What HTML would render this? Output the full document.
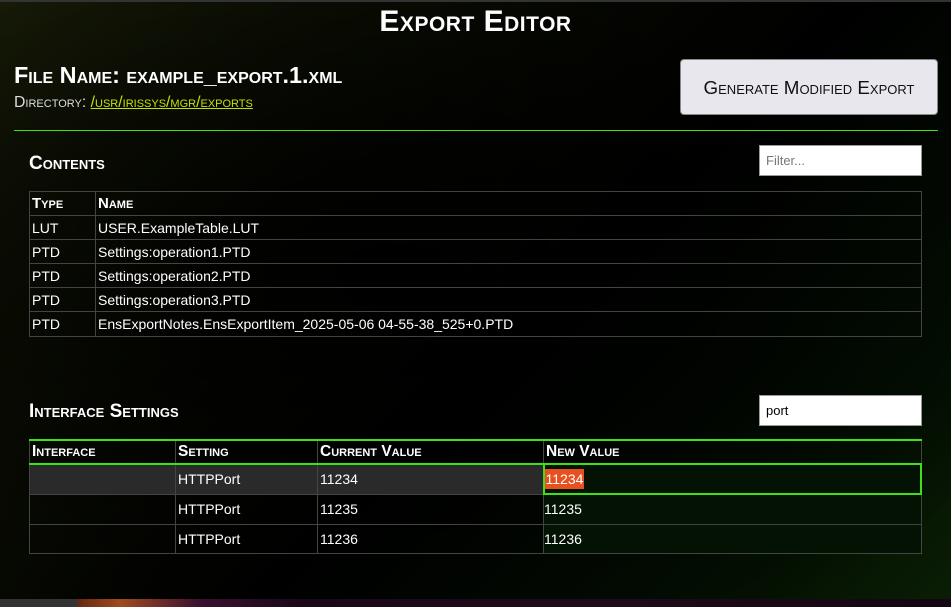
<!DOCTYPE html>
<html><head><meta charset="utf-8"><style>
*{box-sizing:border-box;margin:0;padding:0}
body{width:951px;height:607px;overflow:hidden;position:relative;font-family:"Liberation Sans",sans-serif;color:#fff;
background:radial-gradient(ellipse 700px 420px at 40% 45%,#000 0%,rgba(0,0,0,0) 100%),linear-gradient(135deg,#1a1f08 0%,#080a02 35%,#000 55%,#031002 85%,#0a1e04 100%);background-color:#000}
.abs{position:absolute}
.sc{font-variant:small-caps;font-weight:bold}
h1{position:absolute;left:0;width:951px;top:5px;text-align:center;font-size:30px;font-variant:small-caps;font-weight:bold;letter-spacing:0.5px}
table{position:absolute;border-collapse:collapse;font-size:14px}
td,th{border:1px solid #444;padding:0 2px;text-align:left;vertical-align:middle}
th{font-variant:small-caps;font-weight:bold;font-size:15px}
input{position:absolute;background:#fff;border:1px solid #999;font-family:"Liberation Sans",sans-serif;font-size:13px;padding:0 6px;color:#000}
</style></head><body>
<div class="abs" style="left:0;top:0;width:951px;height:2px;background:#333"></div>
<h1>Export Editor</h1>
<div class="abs sc" style="left:14px;top:62px;font-size:23.4px;white-space:nowrap">File Name: example_export.1.xml</div>
<div class="abs" style="left:14px;top:94px;font-size:15.8px;font-variant:small-caps;color:#ddd;white-space:nowrap">Directory: <span style="color:#c8e000;text-decoration:underline">/usr/irissys/mgr/exports</span></div>
<div class="abs sc" style="left:680px;top:59px;width:258px;height:56px;background:#e8e7ee;border:1px solid #888;border-radius:4px;color:#111;font-size:18.8px;font-weight:normal;text-align:center;line-height:56px;white-space:nowrap">Generate Modified Export</div>
<div class="abs" style="left:14px;top:130px;width:924px;height:1px;background:#3ee01a"></div>

<div class="abs sc" style="left:29px;top:153px;font-size:19px">Contents</div>
<input style="left:759px;top:145px;width:163px;height:31px;color:#777" value="Filter...">
<table style="left:29px;top:191px;width:893px;border-top:1px solid #3ee01a">
<tr style="height:24px;border-bottom:1px solid #3ee01a"><th style="width:66px">Type</th><th>Name</th></tr>
<tr style="height:24px"><td>LUT</td><td>USER.ExampleTable.LUT</td></tr>
<tr style="height:24px"><td>PTD</td><td>Settings:operation1.PTD</td></tr>
<tr style="height:24px"><td>PTD</td><td>Settings:operation2.PTD</td></tr>
<tr style="height:24px"><td>PTD</td><td>Settings:operation3.PTD</td></tr>
<tr style="height:25px"><td>PTD</td><td>EnsExportNotes.EnsExportItem_2025-05-06 04-55-38_525+0.PTD</td></tr>
</table>

<div class="abs sc" style="left:29px;top:401px;font-size:19px">Interface Settings</div>
<input style="left:759px;top:395px;width:163px;height:31px" value="port">
<table style="left:29px;top:439px;width:893px;border-top:2px solid #3ee01a;font-size:14px">
<tr style="height:24px;border-bottom:2px solid #3ee01a"><th style="width:146px;font-size:15.5px">Interface</th><th style="width:142px;font-size:15.5px">Setting</th><th style="width:226px;font-size:15.5px">Current Value</th><th style="font-size:15.5px">New Value</th></tr>
<tr style="height:30px;background:#2a2a2a"><td></td><td>HTTPPort</td><td>11234</td><td style="background:#031203;border:2px solid #3ee01a;padding-left:0"><span style="background:#e8501f;padding:2px 1px">11234</span></td></tr>
<tr style="height:30px"><td></td><td>HTTPPort</td><td>11235</td><td style="background:#031203;padding-left:0">11235</td></tr>
<tr style="height:29px"><td></td><td>HTTPPort</td><td>11236</td><td style="background:#031203;padding-left:0">11236</td></tr>
</table>

<div class="abs" style="left:0;top:599px;width:951px;height:8px;background:linear-gradient(90deg,#333 0,#333 75px,#6a2a10 80px,#a04a20 120px,#3a1030 200px,#1a0818 300px,#200a1a 600px,#140612 951px)"></div>
</body></html>
